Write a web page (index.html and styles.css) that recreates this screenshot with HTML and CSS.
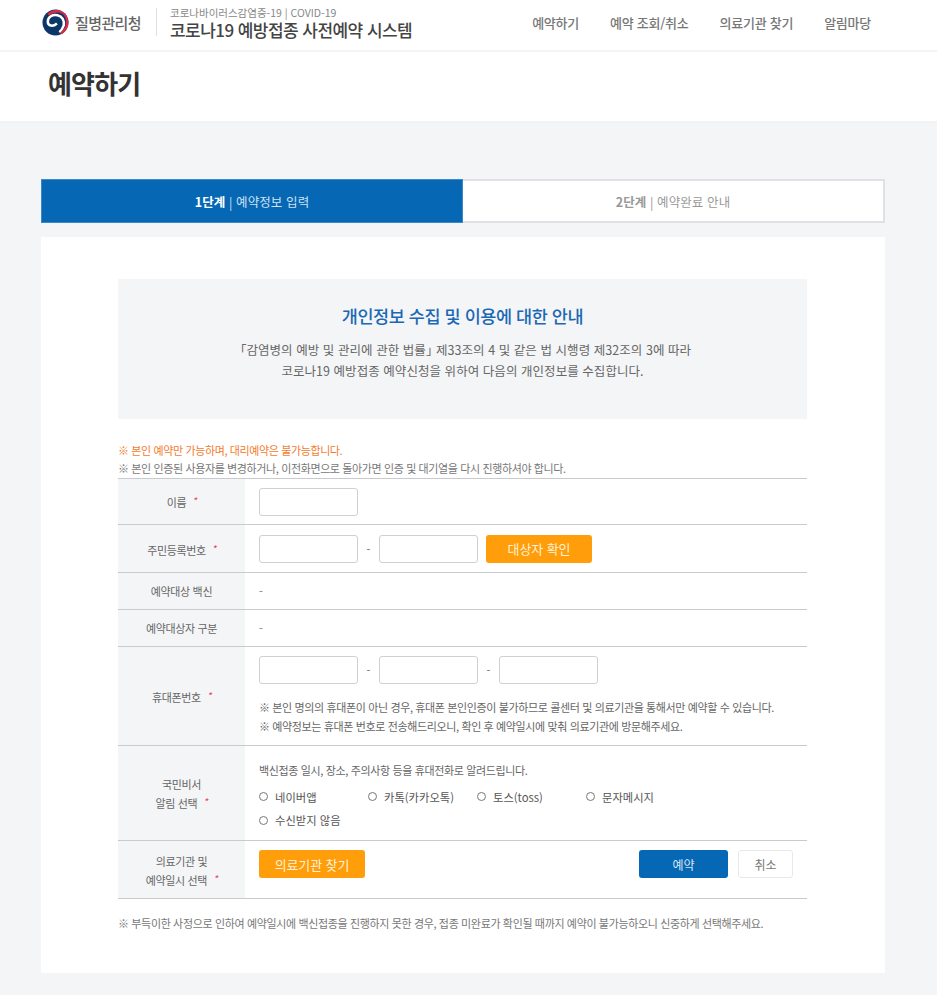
FILE: index.html
```html
<!DOCTYPE html>
<html lang="ko">
  <head>
    <meta charset="UTF-8" />
    <meta name="viewport" content="width=device-width, initial-scale=1.0" />
    <title>예약하기</title>
    <link rel="stylesheet" href="styles.css">
  </head>
  <body>
    <header class="top">
      <div class="brand">
        <svg class="logo" viewBox="0 0 28 28" width="27" height="27">
          <defs>
            <clipPath id="logoClip"><circle cx="14" cy="14" r="13.500"/></clipPath>
          </defs>
          <circle cx="14" cy="14" r="13.500" fill="#0b3768"/>
          <g clip-path="url(#logoClip)" fill="none">
            <path d="M15.500 15C11.500 18.500 6 18 6 13C6 8 11 5.500 16 6.500C21 7.500 23.500 12 22.500 17C21.500 20 20 22.500 18 24" stroke="#fff" stroke-width="2.600"/>
            <path d="M6.500 6C14 -.5 24.500 2 26 10.500C27.200 16 25 22.500 19.500 25.800" stroke="#dc2a46" stroke-width="2.800"/>
          </g>
        </svg>
        <span class="agency">질병관리청</span>
        <div class="system">
          <p class="system-sub">코로나바이러스감염증-19 | COVID-19</p>
          <p class="system-name">코로나19 예방접종 사전예약 시스템</p>
        </div>
      </div>
      <nav class="gnb">
        <a>예약하기</a>
        <a>예약 조회/취소</a>
        <a>의료기관 찾기</a>
        <a>알림마당</a>
      </nav>
    </header>

    <div class="page-title">
      <h1>예약하기</h1>
    </div>

    <main class="wrap">
      <div class="steps">
        <div class="step step-on"><b>1단계</b> | 예약정보 입력</div>
        <div class="step"><b>2단계</b> | 예약완료 안내</div>
      </div>

      <section class="panel">
        <div class="notice">
          <h2>개인정보 수집 및 이용에 대한 안내</h2>
          <p>「감염병의 예방 및 관리에 관한 법률<span class="mark-close">」</span> 제33조의 4 및 같은 법 시행령 제32조의 3에 따라</p>
          <p>코로나19 예방접종 예약신청을 위하여 다음의 개인정보를 수집합니다.</p>
        </div>

        <p class="note note-warn">※ 본인 예약만 가능하며, 대리예약은 불가능합니다.</p>
        <p class="note">※ 본인 인증된 사용자를 변경하거나, 이전화면으로 돌아가면 인증 및 대기열을 다시 진행하셔야 합니다.</p>

        <div class="form">
          <div class="row row-name">
            <div class="th">이름 <i>*</i></div>
            <div class="td td-line"><input type="text" /></div>
          </div>
          <div class="row row-rrn">
            <div class="th">주민등록번호 <i>*</i></div>
            <div class="td td-line">
              <input type="text" /><span class="dash">-</span><input type="text" />
              <button class="btn btn-orange btn-check" type="button">대상자 확인</button>
            </div>
          </div>
          <div class="row row-plain">
            <div class="th">예약대상 백신</div>
            <div class="td td-line"><span class="empty">-</span></div>
          </div>
          <div class="row row-plain">
            <div class="th">예약대상자 구분</div>
            <div class="td td-line"><span class="empty">-</span></div>
          </div>
          <div class="row row-phone">
            <div class="th">휴대폰번호 <i>*</i></div>
            <div class="td">
              <div class="td-line">
                <input type="text" /><span class="dash">-</span><input type="text" /><span class="dash">-</span><input type="text" />
              </div>
              <p class="help help-first">※ 본인 명의의 휴대폰이 아닌 경우, 휴대폰 본인인증이 불가하므로 콜센터 및 의료기관을 통해서만 예약할 수 있습니다.</p>
              <p class="help">※ 예약정보는 휴대폰 번호로 전송해드리오니, 확인 후 예약일시에 맞춰 의료기관에 방문해주세요.</p>
            </div>
          </div>
          <div class="row row-alarm">
            <div class="th">국민비서<br />알림 선택 <i>*</i></div>
            <div class="td">
              <p class="alarm-text">백신접종 일시, 장소, 주의사항 등을 휴대전화로 알려드립니다.</p>
              <div class="radios">
                <label><span class="dot"></span>네이버앱</label>
                <label><span class="dot"></span>카톡(카카오톡)</label>
                <label><span class="dot"></span>토스(toss)</label>
                <label><span class="dot"></span>문자메시지</label>
                <label><span class="dot"></span>수신받지 않음</label>
              </div>
            </div>
          </div>
          <div class="row row-hospital">
            <div class="th">의료기관 및<br />예약일시 선택 <i>*</i></div>
            <div class="td td-actions">
              <button class="btn btn-orange btn-find" type="button">의료기관 찾기</button>
              <div class="actions">
                <button class="btn btn-blue" type="button">예약</button>
                <button class="btn btn-white" type="button">취소</button>
              </div>
            </div>
          </div>
        </div>

        <p class="foot-note">※ 부득이한 사정으로 인하여 예약일시에 백신접종을 진행하지 못한 경우, 접종 미완료가 확인될 때까지 예약이 불가능하오니 신중하게 선택해주세요.</p>
      </section>
    </main>
  </body>
</html>
```

FILE: styles.css
```css
* {
  box-sizing: border-box;
}
html {
  overflow: hidden;
}
body {
  margin: 0;
  height: 995px;
  overflow: hidden;
  background-color: #f4f5f7;
  color: #555;
  font-family: "Noto Sans CJK KR", "Noto Sans", sans-serif;
  font-size: 11px;
}
p,
h1,
h2 {
  margin: 0;
}

.top {
  display: flex;
  justify-content: space-between;
  height: 52px;
  padding: 0 66px 0 42px;
  background-color: #fff;
  border-bottom: 2px solid #f3f4f8;
}
.brand {
  display: flex;
  align-items: center;
  padding-bottom: 6px;
}
.logo {
  width: 27px;
  height: 27px;
}
.agency {
  width: 87px;
  padding-left: 6px;
  color: #666;
  font-size: 15px;
  font-weight: 500;
  letter-spacing: -0.6px;
}
.system {
  height: 28px;
  padding-left: 13px;
  border-left: 1px solid #dfe0e4;
}
.system-sub {
  margin-top: -1px;
  color: #888;
  font-size: 10.500px;
  line-height: 12px;
}
.system-name {
  color: #444;
  font-size: 17px;
  font-weight: 500;
  line-height: 22px;
  letter-spacing: -0.55px;
}
.gnb {
  display: flex;
  gap: 31px;
  align-items: center;
  padding-bottom: 5px;
  color: #777;
  font-size: 13px;
  font-weight: 500;
  letter-spacing: -0.25px;
}

.page-title {
  height: 71px;
  padding: 12px 48px 0;
  background-color: #fff;
  border-bottom: 2px solid #f1f2f6;
}
.page-title h1 {
  color: #333;
  font-size: 26px;
  font-weight: 700;
  line-height: 38px;
  letter-spacing: -0.8px;
}

.wrap {
  width: 844px;
  margin: 56px 0 0 41px;
}
.steps {
  display: flex;
  height: 44px;
}
.step {
  display: flex;
  flex: 1;
  align-items: center;
  justify-content: center;
  background-color: #fff;
  border: 2px solid #e0e0e5;
  border-left: 0;
  color: #999;
  font-size: 12.500px;
  letter-spacing: 0.1px;
  white-space: pre;
}
.step-on {
  flex: none;
  width: 422px;
  background-color: #0667b5;
  border: 1px solid #3d88c6;
  color: #cfe2f2;
}
.step-on b {
  color: #fff;
}
.step b {
  font-weight: 700;
}

.panel {
  height: 736px;
  margin-top: 14px;
  padding: 42px 78px 0 77px;
  background-color: #fff;
}
.notice {
  height: 140px;
  padding-top: 24px;
  margin-bottom: 22px;
  background-color: #f4f5f7;
  text-align: center;
}
.notice h2 {
  margin-bottom: 11px;
  color: #1c68b4;
  font-size: 17.500px;
  font-weight: 500;
  line-height: 25px;
  letter-spacing: -0.45px;
}
.notice p {
  color: #666;
  font-size: 12.500px;
  line-height: 21px;
  letter-spacing: 0.05px;
}
.mark-close {
  letter-spacing: -6px;
}
.note {
  color: #777;
  font-size: 11px;
  line-height: 18px;
  letter-spacing: -0.38px;
  white-space: nowrap;
}
.note-warn {
  color: #f47b2c;
}

.form {
  border-top: 1px solid #c9cace;
  margin-top: 1px;
}
.row {
  display: flex;
  border-bottom: 1px solid #c9cace;
}
.row-name {
  height: 46px;
}
.row-rrn {
  height: 48px;
}
.row-plain {
  height: 37px;
}
.row-phone {
  height: 99px;
}
.row-alarm {
  height: 95px;
}
.row-hospital {
  height: 58px;
}
.th {
  flex: none;
  width: 127px;
  padding-top: 13px;
  background-color: #f4f5f7;
  color: #666;
  font-size: 11px;
  line-height: 18px;
  letter-spacing: -0.35px;
  text-align: center;
}
.row-rrn .th {
  padding-top: 15px;
}
.row-plain .th {
  padding-top: 9px;
}
.row-phone .th {
  padding-top: 40px;
}
.row-alarm .th {
  padding-top: 30px;
  line-height: 17px;
}
.row-hospital .th {
  padding-top: 11px;
}
.th i {
  margin-left: 3px;
  color: #ea3f5c;
  font-size: 10px;
  vertical-align: 2px;
}
.td {
  flex: 1;
  padding-left: 14px;
  color: #666;
}
.td-line {
  display: flex;
  align-items: center;
}
input {
  width: 99px;
  height: 28px;
  padding: 0 8px;
  background-color: #fff;
  border: 1px solid #cfd0d4;
  border-radius: 3px;
}
.dash {
  width: 21px;
  color: #666;
  text-align: center;
  font-size: 11px;
}
.row-phone .td-line {
  height: 46px;
}
.empty {
  color: #777;
}
.help {
  color: #666;
  font-size: 11px;
  line-height: 19px;
  letter-spacing: -0.37px;
  white-space: nowrap;
}
.help-first {
  margin-top: 5px;
}
.alarm-text {
  padding-top: 14px;
  color: #666;
  font-size: 11px;
  line-height: 20px;
  letter-spacing: -0.36px;
}
.radios {
  display: grid;
  grid-template-columns: repeat(4, 109px);
  grid-auto-rows: 23.500px;
  margin-top: 5px;
}
.radios label {
  display: flex;
  align-items: center;
  color: #555;
  font-size: 11.300px;
  white-space: nowrap;
}
.dot {
  width: 9px;
  height: 9px;
  margin-right: 7px;
  border: 1px solid #777;
  border-radius: 50%;
}

.btn {
  height: 28px;
  padding: 0;
  border: 0;
  border-radius: 3px;
  font-family: inherit;
  font-size: 13px;
  letter-spacing: -0.1px;
}
.btn-orange {
  background-color: #ff9d0a;
  color: #fff2da;
}
.btn-check {
  width: 106px;
  margin-left: 8px;
}
.btn-find {
  width: 106px;
}
.btn-blue {
  width: 89px;
  background-color: #0667b5;
  color: #d5e6f4;
  font-size: 12px;
}
.btn-white {
  width: 55px;
  background-color: #fff;
  border: 1px solid #e8e8ec;
  color: #777;
  font-size: 12px;
}
.td-actions {
  display: flex;
  justify-content: space-between;
  padding: 9px 14px 0 14px;
}
.actions {
  display: flex;
  gap: 10px;
}
.foot-note {
  margin-top: 15px;
  color: #777;
  font-size: 11px;
  line-height: 18px;
  letter-spacing: -0.36px;
  white-space: nowrap;
}
```
